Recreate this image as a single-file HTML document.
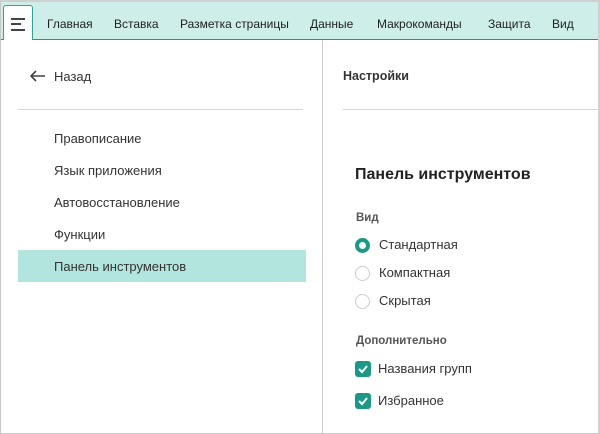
<!DOCTYPE html>
<html><head><meta charset="utf-8"><style>
*{margin:0;padding:0;box-sizing:border-box}
body{width:600px;height:434px;overflow:hidden;background:#fff;font-family:"Liberation Sans","DejaVu Sans",sans-serif;color:#333;position:relative}
.frame{position:absolute;left:0;top:0;width:600px;height:434px;border:1px solid #c8c8c8;border-top:2px solid #d0d0d0;border-right:2px solid #d0d0d0}
.bar{position:absolute;left:1px;top:2px;width:597px;height:38px;background:#cdeee9;border-bottom:1px solid #1a9a86}
.ham{position:absolute;left:3px;top:5px;width:30px;height:35px;background:#fff;border:1px solid #2aa892;border-bottom:none;border-radius:3px 3px 0 0}
.ham i{position:absolute;left:7px;width:14px;height:2px;background:#3d4549}
.tab{position:absolute;top:17px;font-size:12px;color:#222}
.t{position:absolute;font-size:13px;color:#333;white-space:nowrap}
.vl{position:absolute;left:322px;top:40px;width:1px;height:394px;background:#ccc}
.hl{position:absolute;height:1px;background:#d6d6d6}
.sel{position:absolute;left:18px;top:250px;width:288px;height:32px;background:#b2e5de}
.rad{position:absolute;left:355px;width:15px;height:15px;border-radius:50%;border:1px solid #ccc;background:#fff}
.rad.on{border:4px solid #1a9a86}
.cb{position:absolute;left:355px;width:16px;height:16px;border-radius:3px;background:#1a9a86}
.cb svg{position:absolute;left:2px;top:2px}
</style></head><body>
<div class="bar"></div>
<div class="ham"><i style="top:12px"></i><i style="top:17px;width:10px"></i><i style="top:23px"></i></div>
<div class="tab" style="left:47px">Главная</div>
<div class="tab" style="left:114px">Вставка</div>
<div class="tab" style="left:180px">Разметка страницы</div>
<div class="tab" style="left:310px">Данные</div>
<div class="tab" style="left:377px">Макрокоманды</div>
<div class="tab" style="left:488px">Защита</div>
<div class="tab" style="left:552px">Вид</div>

<svg style="position:absolute;left:30px;top:70px" width="16" height="12" viewBox="0 0 16 12"><path d="M1 6H15M6 1L1 6L6 11" fill="none" stroke="#444" stroke-width="1.6"/></svg>
<div class="t" style="left:54px;top:69px">Назад</div>
<div class="hl" style="left:18px;top:109px;width:285px"></div>
<div class="t" style="left:54px;top:131px">Правописание</div>
<div class="t" style="left:54px;top:163px">Язык приложения</div>
<div class="t" style="left:54px;top:195px">Автовосстановление</div>
<div class="sel"></div>
<div class="t" style="left:54px;top:227px">Функции</div>
<div class="t" style="left:54px;top:259px">Панель инструментов</div>

<div class="vl"></div>
<div class="t" style="left:343px;top:69px;font-weight:bold;font-size:12.5px">Настройки</div>
<div class="hl" style="left:343px;top:109px;width:255px"></div>
<div class="t" style="left:355px;top:166px;font-size:16px;font-weight:bold;color:#222">Панель инструментов</div>
<div class="t" style="left:356px;top:212px;font-size:11.5px;font-weight:bold;color:#555">Вид</div>
<div class="rad on" style="top:238px"></div><div class="t" style="left:379px;top:237px">Стандартная</div>
<div class="rad" style="top:266px"></div><div class="t" style="left:379px;top:265px">Компактная</div>
<div class="rad" style="top:294px"></div><div class="t" style="left:379px;top:293px">Скрытая</div>
<div class="t" style="left:356px;top:335px;font-size:11.5px;font-weight:bold;color:#555">Дополнительно</div>
<div class="cb" style="top:361px"><svg width="12" height="12" viewBox="0 0 12 12"><path d="M2 6L5 9L10 3" fill="none" stroke="#fff" stroke-width="2"/></svg></div>
<div class="t" style="left:378px;top:361px">Названия групп</div>
<div class="cb" style="top:393px"><svg width="12" height="12" viewBox="0 0 12 12"><path d="M2 6L5 9L10 3" fill="none" stroke="#fff" stroke-width="2"/></svg></div>
<div class="t" style="left:378px;top:393px">Избранное</div>
<div class="frame"></div>
</body></html>
